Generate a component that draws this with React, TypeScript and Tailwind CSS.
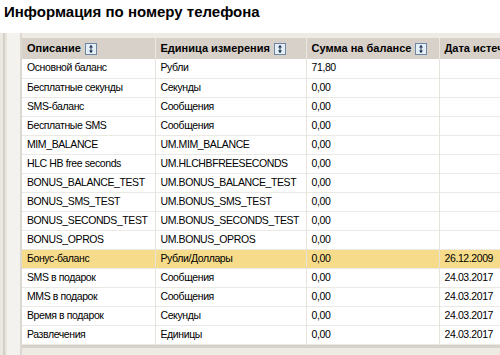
import React from "react";

type Row = { name: string; unit: string; sum: string; date: string; active?: boolean };

const rows: Row[] = [
  { name: "Основной баланс", unit: "Рубли", sum: "71,80", date: "" },
  { name: "Бесплатные секунды", unit: "Секунды", sum: "0,00", date: "" },
  { name: "SMS-баланс", unit: "Сообщения", sum: "0,00", date: "" },
  { name: "Бесплатные SMS", unit: "Сообщения", sum: "0,00", date: "" },
  { name: "MIM_BALANCE", unit: "UM.MIM_BALANCE", sum: "0,00", date: "" },
  { name: "HLC HB free seconds", unit: "UM.HLCHBFREESECONDS", sum: "0,00", date: "" },
  { name: "BONUS_BALANCE_TEST", unit: "UM.BONUS_BALANCE_TEST", sum: "0,00", date: "" },
  { name: "BONUS_SMS_TEST", unit: "UM.BONUS_SMS_TEST", sum: "0,00", date: "" },
  { name: "BONUS_SECONDS_TEST", unit: "UM.BONUS_SECONDS_TEST", sum: "0,00", date: "" },
  { name: "BONUS_OPROS", unit: "UM.BONUS_OPROS", sum: "0,00", date: "" },
  { name: "Бонус-баланс", unit: "Рубли/Доллары", sum: "0,00", date: "26.12.2009", active: true },
  { name: "SMS в подарок", unit: "Сообщения", sum: "0,00", date: "24.03.2017" },
  { name: "MMS в подарок", unit: "Сообщения", sum: "0,00", date: "24.03.2017" },
  { name: "Время в подарок", unit: "Секунды", sum: "0,00", date: "24.03.2017" },
  { name: "Развлечения", unit: "Единицы", sum: "0,00", date: "24.03.2017" },
];

function SortIcon() {
  return (
    <svg width="12" height="12" viewBox="0 0 12 12" className="shrink-0">
      <rect x="0.5" y="0.5" width="11" height="11" fill="#e4eef6" stroke="#6f86a3" />
      <path d="M6 2.5 L6 9.5" stroke="#1f3552" strokeWidth="1" />
      <path d="M4 4.5 L6 2 L8 4.5 Z" fill="#1f3552" />
      <path d="M4 7.5 L6 10 L8 7.5 Z" fill="#1f3552" />
    </svg>
  );
}

export default function App() {
  return (
    <div className="w-[500px] h-[355px] overflow-hidden bg-white font-['Liberation_Sans',Arial,sans-serif] text-black">
      <div className="h-[33px] pl-[4px] pt-[2px] text-[15px] leading-[20px] font-bold">
        Информация по номеру телефона
      </div>
      <div className="flex bg-[#eeebe4]">
        <div className="flex w-[22px] shrink-0">
          <div className="w-[3px] bg-[#ebe8e1]" />
          <div className="w-[2px] bg-[#d4d0c8]" />
          <div className="w-[2px] bg-[#e8e5de]" />
          <div className="w-[13px] bg-[#f4f2ee]" />
          <div className="w-[2px] bg-[#dcd8d0]" />
        </div>
        <div className="flex-1 overflow-hidden pt-[5px]">
          <table className="table-fixed border-collapse w-[540px]">
            <colgroup>
              <col className="w-[133px]" />
              <col className="w-[151px]" />
              <col className="w-[133px]" />
              <col className="w-[123px]" />
            </colgroup>
            <thead>
              <tr className="h-[21px] bg-[#d8d1c9] text-[11px]">
                {["Описание", "Единица измерения", "Сумма на балансе"].map((h) => (
                  <th key={h} className="border-r border-[#ece8e2] px-[5px] text-left font-bold">
                    <div className="flex items-center gap-[4px] whitespace-nowrap">
                      {h}
                      <SortIcon />
                    </div>
                  </th>
                ))}
                <th className="px-[5px] text-left font-bold whitespace-nowrap">Дата истечения</th>
              </tr>
            </thead>
            <tbody className="text-[10.5px] tracking-[-0.4px]">
              {rows.map((r) => (
                <tr
                  key={r.name}
                  className={`h-[19px] border-b border-[#ebe9e4] ${r.active ? "bg-[#f6dc8a]" : "bg-white"}`}
                >
                  <td className="border-r border-[#e6e3dd] px-[5px] whitespace-nowrap overflow-hidden">{r.name}</td>
                  <td className="border-r border-[#e6e3dd] px-[5px] whitespace-nowrap overflow-hidden">{r.unit}</td>
                  <td className="border-r border-[#e6e3dd] px-[5px] whitespace-nowrap">{r.sum}</td>
                  <td className="px-[5px] whitespace-nowrap">{r.date}</td>
                </tr>
              ))}
            </tbody>
          </table>
          <div className="h-[3px] bg-[#d6d2ca]" />
          <div className="h-[20px] bg-[#eeebe4]" />
        </div>
      </div>
    </div>
  );
}
